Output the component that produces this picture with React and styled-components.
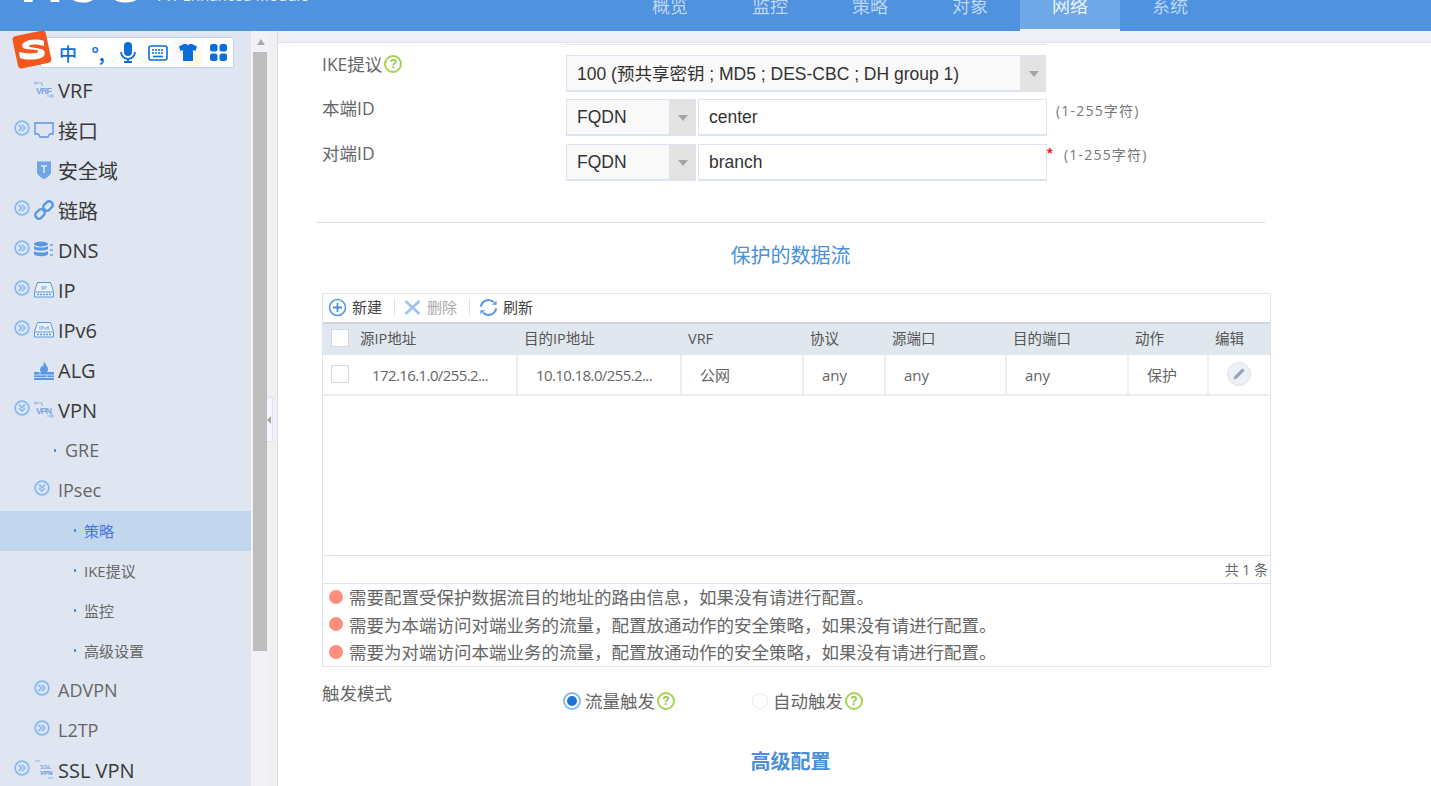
import React from 'react';
import styled, { createGlobalStyle } from 'styled-components';
import { Pencil } from 'lucide-react';

const sans = `"Open Sans", "Noto Sans CJK SC", sans-serif`;
const arial = `"Liberation Sans", "Noto Sans CJK SC", sans-serif`;
const columns = '29px 164px 164px 122px 82px 121px 122px 80px 63px';

const Global = createGlobalStyle`
  html, body { margin: 0; padding: 0; background: #fff; overflow: hidden; }
  * { box-sizing: border-box; }
`;

const Page = styled.div`
  width: 1431px;
  height: 786px;
  overflow: hidden;
  position: relative;
  display: flex;
  flex-direction: column;
  font-family: ${sans};
`;

/* header */
const Header = styled.header`
  height: 31px;
  flex: none;
  background: #4f92e0;
  display: flex;
  overflow: hidden;
`;
const Logo = styled.div`
  width: 157px;
  flex: none;
  margin-top: -40px;
  padding-left: 20px;
  font: bold 60px/44px ${arial};
  color: #fff;
  letter-spacing: 3px;
`;
const Module = styled.div`
  margin-top: -12px;
  font: 15px/15px ${sans};
  color: #e6f0fb;
  white-space: nowrap;
  width: 463px;
`;
const Tabs = styled.nav`
  display: flex;
`;
const Tab = styled.div`
  width: 100px;
  height: 31px;
  text-align: center;
  font-size: 18px;
  line-height: 13px;
  color: ${p => (p.$active ? '#eaf3fd' : '#bcd6f4')};
  background: ${p => (p.$active ? '#6fa8e7' : 'transparent')};
  border-bottom: ${p => (p.$active ? '2px solid #eef0f5' : 'none')};
`;

/* body */
const Body = styled.div`
  flex: 1;
  display: flex;
  min-height: 0;
`;
const Sidebar = styled.aside`
  width: 251px;
  flex: none;
  background: #dfe5f1;
  padding-top: 40px;
  overflow: hidden;
`;
const NavRow = styled.div`
  height: 40px;
  display: flex;
  align-items: center;
  padding-left: ${p => p.$indent}px;
  padding-bottom: 2px;
  gap: ${p => p.$gap || 4}px;
  background: ${p => (p.$active ? '#c2d6ee' : 'transparent')};
`;
const NavLabel = styled.span`
  font-size: ${p => p.$size}px;
  color: ${p => p.$color};
  white-space: nowrap;
`;
const Dot = styled.i`
  width: 2px;
  height: 3px;
  background: #4a90d9;
  flex: none;
`;
const IconSlot = styled.svg`
  width: 20px;
  height: 20px;
  flex: none;
`;
const ToggleSvg = styled.svg`
  width: 16px;
  height: 16px;
  flex: none;
  margin-top: -4px;
`;
const ScrollTrack = styled.div`
  width: 16px;
  flex: none;
  background: #f2f2f5;
  padding: 8px 0 0 2px;
`;
const ScrollArrow = styled.div`
  width: 0;
  height: 0;
  margin: 0 0 7px 4px;
  border-left: 4.5px solid transparent;
  border-right: 4.5px solid transparent;
  border-bottom: 6px solid #a9a9a9;
`;
const ScrollThumb = styled.div`
  width: 14px;
  height: 599px;
  background: #bdbdbd;
`;
const Splitter = styled.div`
  width: 11px;
  flex: none;
  background: #f0f0f4;
  border-right: 1px solid #dcdce2;
  padding-top: 366px;
`;
const Grip = styled.div`
  width: 6px;
  height: 45px;
  background: #f4f6fb;
  border: 1px solid #dde4f0;
  border-left: none;
  display: flex;
  align-items: center;
  &::before {
    content: '';
    border-right: 4px solid #a5a5a5;
    border-top: 4px solid transparent;
    border-bottom: 4px solid transparent;
  }
`;

/* form */
const Main = styled.main`
  flex: 1;
  display: flex;
  flex-direction: column;
  min-width: 0;
`;
const TopBand = styled.div`
  height: 12px;
  flex: none;
  background: #eef0f5;
  border-bottom: 1px solid #e2e3e8;
`;
const Stub = styled.div`
  width: 480px;
  height: 2px;
  flex: none;
  margin: 0 0 10px 288px;
  border-bottom: 1px solid #dde4f0;
`;
const FieldRow = styled.div`
  display: flex;
  align-items: flex-start;
  flex: none;
  height: 37px;
  margin: 0 0 ${p => p.$after}px 44px;
`;
const Label = styled.label`
  width: 244px;
  flex: none;
  font-size: 17.5px;
  line-height: 18px;
  color: #666;
  display: flex;
  align-items: center;
`;
const SelectBox = styled.div`
  width: ${p => p.$w}px;
  height: 37px;
  flex: none;
  display: flex;
  background: #f9f9f9;
  border: 1px solid #dde4f0;
  border-right: none;
`;
const SelectText = styled.div`
  flex: 1;
  padding-left: 10px;
  font: 17.5px/${p => p.$line || 35}px ${arial};
  color: #333;
  white-space: nowrap;
  border-right: 1px solid #dde4f0;
  border-bottom: 1px solid #dde4f0;
`;
const SelectArrow = styled.div`
  width: ${p => p.$w}px;
  flex: none;
  background: #e3e3e3;
  display: flex;
  align-items: center;
  justify-content: center;
  &::before {
    content: '';
    border-top: 6px solid #a5a5a5;
    border-left: 5.5px solid transparent;
    border-right: 5.5px solid transparent;
  }
`;
const TextInput = styled.div`
  width: 349px;
  height: 37px;
  flex: none;
  margin-left: 2px;
  padding-left: 10px;
  font: 17.5px/34px ${arial};
  color: #333;
  background: #fff;
  border: 1px solid #dde4f0;
  border-width: 1px 1px 2px;
`;
const Star = styled.span`
  width: 6px;
  margin: 0 2px 0 0;
  flex: none;
  font: bold 14px/18px ${arial};
  color: #f11;
`;
const Hint = styled.span`
  margin-left: ${p => p.$left}px;
  margin-top: ${p => p.$top}px;
  font-size: 14px;
  line-height: 16px;
  letter-spacing: 1.2px;
  color: #777;
  white-space: nowrap;
`;
const Divider = styled.hr`
  width: 949px;
  height: 1px;
  margin: 0 0 0 38px;
  border: none;
  background: #d9dfea;
  flex: none;
`;
const SectionTitle = styled.h3`
  width: 949px;
  flex: none;
  margin: ${p => p.$top}px 0 0 38px;
  text-align: center;
  font-size: 20px;
  line-height: 26px;
  font-weight: ${p => (p.$bold ? 700 : 400)};
  color: #4a90d9;
`;

/* table panel */
const Panel = styled.section`
  width: 949px;
  height: 374px;
  flex: none;
  margin: 24px 0 0 44px;
  border: 1px solid #dde4f0;
  display: flex;
  flex-direction: column;
`;
const Toolbar = styled.div`
  height: 28px;
  flex: none;
  display: flex;
  align-items: center;
  padding: 0 0 2px 5px;
`;
const ToolButton = styled.div`
  display: flex;
  align-items: center;
  gap: 5px;
  font-size: 15px;
  line-height: 20px;
  color: ${p => (p.$off ? '#a9a9a9' : '#444')};
`;
const ToolSep = styled.i`
  width: 1px;
  height: 18px;
  background: #e6e6e6;
  margin: 0 ${p => p.$right}px 0 12px;
`;
const HeadRow = styled.div`
  display: grid;
  grid-template-columns: ${columns};
  height: 33px;
  flex: none;
  background: #e1e7ee;
  border-top: 2px solid #d2d6db;
`;
const HeadCell = styled.div`
  padding-left: ${p => p.$pad ?? 8}px;
  font-size: 14.5px;
  line-height: 29px;
  color: #555;
  white-space: nowrap;
`;
const DataRow = styled.div`
  display: grid;
  grid-template-columns: ${columns};
  height: 41px;
  flex: none;
  border-bottom: 2px solid #eeeeee;
`;
const DataCell = styled.div`
  padding-left: ${p => p.$pad ?? 18}px;
  font-size: 15px;
  line-height: 38px;
  letter-spacing: ${p => (p.$tight ? '-0.6px' : 'normal')};
  color: #666;
  white-space: nowrap;
  border-left: 2px solid ${p => (p.$bare ? 'transparent' : '#eeeeee')};
  display: flex;
  align-items: center;
`;
const Check = styled.span`
  width: 18px;
  height: 18px;
  display: block;
  margin: ${p => p.$top}px 0 0 ${p => p.$left}px;
  background: #fff;
  border: 1px solid #d8d8d8;
`;
const EditBtn = styled.span`
  width: 24px;
  height: 24px;
  margin-left: 18px;
  margin-top: -2px;
  border-radius: 50%;
  background: #eef0f7;
  border: 1px solid #dfe2ec;
  display: flex;
  align-items: center;
  justify-content: center;
  color: #9aa5bb;
`;
const Empty = styled.div`
  flex: 1;
`;
const Total = styled.div`
  height: 29px;
  flex: none;
  padding-right: 2px;
  text-align: right;
  font-size: 14px;
  line-height: 27px;
  color: #666;
  border-top: 1px solid #dde4f0;
  border-bottom: 1px solid #dde4f0;
`;
const Notes = styled.ul`
  list-style: none;
  margin: 0;
  padding: 0 0 0 6px;
`;
const Note = styled.li`
  display: flex;
  align-items: center;
  gap: 6px;
  height: 27.5px;
  padding-bottom: 1px;
  font-size: 17.5px;
  color: #666;
  white-space: nowrap;
  &::before {
    content: '';
    width: 14px;
    height: 14px;
    border-radius: 50%;
    background: #ff8f7c;
    flex: none;
  }
`;

/* trigger mode */
const ModeRow = styled.div`
  display: flex;
  align-items: flex-start;
  margin: 17px 0 0 44px;
  flex: none;
`;
const ModeOption = styled.div`
  display: flex;
  align-items: center;
  width: ${p => p.$w}px;
  flex: none;
  margin-top: 5px;
  font-size: 17.5px;
  line-height: 24px;
  color: #666;
`;
const Radio = styled.span`
  width: 14px;
  height: 14px;
  flex: none;
  margin: 0 6px 0 -1px;
  border-radius: 50%;
  background: ${p => (p.$on ? '#1f73d8' : '#fff')};
  border: ${p => (p.$on ? '2px solid #fff' : 'none')};
  box-shadow: 0 0 0 ${p => (p.$on ? '2px #8ab9ee' : '1px #ececec')};
`;
const HelpMark = styled.span`
  width: 18px;
  height: 18px;
  flex: none;
  margin-left: 2px;
  border-radius: 50%;
  border: 2px solid #a3d64f;
  color: #8cc63f;
  font: bold 12px/14px ${arial};
  text-align: center;
  background: #fff;
`;

/* input method bar floating over the sidebar */
const ImeBar = styled.div`
  position: absolute;
  left: 40px;
  top: 37px;
  width: 194px;
  height: 31px;
  padding-left: 12px;
  display: flex;
  align-items: center;
  background: #fff;
  border: 1px solid #c0d2ea;
  border-radius: 2px;
  color: #0a6ed8;
`;
const ImeSlot = styled.span`
  width: 30px;
  height: 29px;
  flex: none;
  display: flex;
  align-items: center;
  justify-content: center;
  font: ${p => p.$weight || 500} 18px/20px "Noto Sans CJK SC", sans-serif;
  background: ${p => (p.$glow ? 'radial-gradient(circle at 70% 70%, #fff3cf 0, transparent 45%), radial-gradient(circle at 35% 35%, #efe6fb 0, transparent 50%)' : 'none')};
`;
const ImeLogo = styled.svg`
  position: absolute;
  left: 11px;
  top: 30px;
  width: 42px;
  height: 40px;
`;

const Toggle = ({ down }) => (
  <ToggleSvg viewBox="0 0 16 16">
    <circle cx="8" cy="8" r="6.900" fill="#d8e5f6" stroke="#8ab8ec" strokeWidth="1.700" />
    <g fill="none" stroke="#8ab8ec" strokeWidth="1.700" transform={down ? 'rotate(90 8 8)' : undefined}>
      <path d="M4.500 5l3 3-3 3" />
      <path d="M8 5l3 3-3 3" />
    </g>
  </ToggleSvg>
);

const blue = '#5b98e2';

const NetIcon = ({ text }) => (
  <IconSlot viewBox="0 0 20 20">
    <path d="M2 3h6v3M13 16h4" stroke="#8db6e8" fill="none" />
    <circle cx="1.500" cy="3" r="1.200" fill="none" stroke="#8db6e8" />
    <circle cx="18" cy="16" r="1.200" fill="none" stroke="#8db6e8" />
    <text x="2" y="14" fontSize="9" fontWeight="700" fontFamily="Liberation Sans" fill="#7ba9e2" textLength="16">{text}</text>
  </IconSlot>
);

const BoxIcon = ({ text, x, size }) => (
  <IconSlot viewBox="0 0 20 20">
    <path d="M3.500 2.500h13l3 9v5.500H.5v-5.500z" fill="#eef3fa" stroke={blue} />
    <path d="M1 12h18" stroke={blue} />
    <path d="M3 14.500h14" stroke={blue} strokeWidth="1.500" strokeDasharray="2 1" />
    <text x={x} y="10" fontSize={size} fontWeight="700" fontFamily="Liberation Sans" fill="#7ba9e2">{text}</text>
  </IconSlot>
);

const icons = {
  vrf: <NetIcon text="VRF" />,
  vpn: <NetIcon text="VPN" />,
  ssl: (
    <IconSlot viewBox="0 0 20 20">
      <path d="M1 1h5M14 18h5" stroke="#8db6e8" fill="none" />
      <text x="6" y="9" fontSize="6" fontWeight="700" fontFamily="Liberation Sans" fill="#7ba9e2">SSL</text>
      <text x="6" y="15" fontSize="6" fontWeight="700" fontFamily="Liberation Sans" fill="#5b98e2">VPN</text>
    </IconSlot>
  ),
  port: (
    <IconSlot viewBox="0 0 20 20">
      <path d="M1 3h18v11h-3.500l-1.500 3H6l-1.500-3H1z" fill="none" stroke={blue} strokeWidth="1.400" />
    </IconSlot>
  ),
  shield: (
    <IconSlot viewBox="0 0 20 20">
      <path d="M3 1.500h14v10.500c0 3-4 5.500-7 7-3-1.500-7-4-7-7z" fill="#6fa5e6" />
      <path d="M7 6h6M10 6v7" stroke="#dfe8f5" strokeWidth="1.500" />
    </IconSlot>
  ),
  link: (
    <IconSlot viewBox="0 0 20 20">
      <g fill="none" stroke={blue} strokeWidth="2.400">
        <rect x="10.500" y="1" width="7" height="10" rx="3" transform="rotate(45 14 6)" />
        <rect x="2.500" y="9" width="7" height="10" rx="3" transform="rotate(45 6 14)" />
      </g>
    </IconSlot>
  ),
  dns: (
    <IconSlot viewBox="0 0 20 20">
      <ellipse cx="7" cy="4" rx="7" ry="2.500" fill={blue} />
      <path d="M0 6c2 2 12 2 14 0v3c-2 2-12 2-14 0zM0 11c2 2 12 2 14 0v3c-1 3-13 3-14 0z" fill={blue} />
      <path d="M16 4h3v2h-3zM16 9h3v2h-3zM16 14h3v2h-3z" fill="#86b3ea" />
    </IconSlot>
  ),
  ip: <BoxIcon text="IP" x={7} size={6} />,
  ipv6: <BoxIcon text="IPv6" x={5} size={5} />,
  alg: (
    <IconSlot viewBox="0 0 20 20">
      <path d="M0 12h20v8H0z" fill={blue} />
      <path d="M0 15h20M0 17.500h20M6 12v3M13 15v3" stroke="#dfe5f1" strokeWidth=".8" />
      <path d="M10 1c.5 2.500 4 5 4 8.500 0 1-.5 2-1 2.500H7c-.5-.5-1-1.500-1-2.500C6 8 7.500 7 8 5.500c.5.500 1 1 1 1.500.5-2 1-4 1-6z" fill={blue} />
    </IconSlot>
  ),
};

const nav = [
  { label: 'VRF', icon: 'vrf', indent: 34 },
  { label: '接口', icon: 'port', toggle: true, indent: 14 },
  { label: '安全域', icon: 'shield', indent: 34 },
  { label: '链路', icon: 'link', toggle: true, indent: 14 },
  { label: 'DNS', icon: 'dns', toggle: true, indent: 14 },
  { label: 'IP', icon: 'ip', toggle: true, indent: 14 },
  { label: 'IPv6', icon: 'ipv6', toggle: true, indent: 14 },
  { label: 'ALG', icon: 'alg', indent: 34 },
  { label: 'VPN', icon: 'vpn', toggle: true, down: true, indent: 14 },
  { label: 'GRE', dot: true, indent: 54, gap: 9, size: 18, color: '#666' },
  { label: 'IPsec', toggle: true, down: true, indent: 34, gap: 8, size: 18, color: '#666' },
  { label: '策略', dot: true, indent: 74, gap: 8, size: 15, color: '#4a74e0', active: true },
  { label: 'IKE提议', dot: true, indent: 74, gap: 8, size: 15, color: '#666' },
  { label: '监控', dot: true, indent: 74, gap: 8, size: 15, color: '#666' },
  { label: '高级设置', dot: true, indent: 74, gap: 8, size: 15, color: '#666' },
  { label: 'ADVPN', toggle: true, indent: 34, gap: 8, size: 18, color: '#666' },
  { label: 'L2TP', toggle: true, indent: 34, gap: 8, size: 18, color: '#666' },
  { label: 'SSL VPN', icon: 'ssl', toggle: true, indent: 14 },
];

const tabs = ['概览', '监控', '策略', '对象', '网络', '系统'];
const heads = ['源IP地址', '目的IP地址', 'VRF', '协议', '源端口', '目的端口', '动作', '编辑'];
const cells = ['172.16.1.0/255.2...', '10.10.18.0/255.2...', '公网', 'any', 'any', 'any', '保护'];
const notes = [
  '需要配置受保护数据流目的地址的路由信息，如果没有请进行配置。',
  '需要为本端访问对端业务的流量，配置放通动作的安全策略，如果没有请进行配置。',
  '需要为对端访问本端业务的流量，配置放通动作的安全策略，如果没有请进行配置。',
];

export default function App() {
  return (
    <Page>
      <Global />
      <Header>
        <Logo>H3C</Logo>
        <Module>FW Enhanced Module</Module>
        <Tabs>
          {tabs.map(t => (
            <Tab key={t} $active={t === '网络'}>{t}</Tab>
          ))}
        </Tabs>
      </Header>

      <Body>
        <Sidebar>
          {nav.map(n => (
            <NavRow key={n.label} $indent={n.indent} $gap={n.gap} $active={n.active}>
              {n.toggle && <Toggle down={n.down} />}
              {n.dot && <Dot />}
              {n.icon && icons[n.icon]}
              <NavLabel $size={n.size || 20} $color={n.color || '#3a3a3a'}>{n.label}</NavLabel>
            </NavRow>
          ))}
        </Sidebar>
        <ScrollTrack>
          <ScrollArrow />
          <ScrollThumb />
        </ScrollTrack>
        <Splitter>
          <Grip />
        </Splitter>

        <Main>
          <TopBand />
          <Stub />
          <FieldRow $after={7}>
            <Label>IKE提议<HelpMark>?</HelpMark></Label>
            <SelectBox $w={480}>
              <SelectText $line={37}>100 (预共享密钥 ; MD5 ; DES-CBC ; DH group 1)</SelectText>
              <SelectArrow $w={25} />
            </SelectBox>
          </FieldRow>
          <FieldRow $after={8}>
            <Label>本端ID</Label>
            <SelectBox $w={130}>
              <SelectText>FQDN</SelectText>
              <SelectArrow $w={26} />
            </SelectBox>
            <TextInput>center</TextInput>
            <Hint $left={9} $top={4}>(1-255字符)</Hint>
          </FieldRow>
          <FieldRow $after={41}>
            <Label>对端ID</Label>
            <SelectBox $w={130}>
              <SelectText>FQDN</SelectText>
              <SelectArrow $w={26} />
            </SelectBox>
            <TextInput>branch</TextInput>
            <Star>*</Star>
            <Hint $left={9} $top={3}>(1-255字符)</Hint>
          </FieldRow>
          <Divider />
          <SectionTitle $top={20}>保护的数据流</SectionTitle>

          <Panel>
            <Toolbar>
              <ToolButton>
                <svg width="19" height="19" viewBox="0 0 19 19">
                  <circle cx="9.500" cy="9.500" r="8" fill="none" stroke="#5b98e2" strokeWidth="1.600" />
                  <path d="M5 9.500h9M9.500 5v9" stroke="#4a90d9" strokeWidth="1.800" />
                </svg>
                新建
              </ToolButton>
              <ToolSep $right={8} />
              <ToolButton $off>
                <svg width="19" height="19" viewBox="0 0 19 19">
                  <path d="M2.500 3l14 13M16.500 3l-14 13" stroke="#9cc2ee" strokeWidth="2.600" />
                </svg>
                删除
              </ToolButton>
              <ToolSep $right={9} />
              <ToolButton>
                <svg width="19" height="19" viewBox="0 0 20 19">
                  <path d="M2 8.500A8 8 0 0 1 15.500 4" fill="none" stroke="#5b98e2" strokeWidth="2.200" />
                  <path d="M18 10.500A8 8 0 0 1 4.500 15" fill="none" stroke="#5b98e2" strokeWidth="2.200" />
                  <path d="M13.500 6.500h5v-4zM6.500 12.500h-5v4z" fill="#5b98e2" />
                </svg>
                刷新
              </ToolButton>
            </Toolbar>
            <HeadRow>
              <HeadCell $pad={0}><Check $top={5} $left={8} /></HeadCell>
              {heads.map(h => (
                <HeadCell key={h}>{h}</HeadCell>
              ))}
            </HeadRow>
            <DataRow>
              <DataCell $bare $pad={0}><Check $top={-2} $left={6} /></DataCell>
              {cells.map((c, i) => (
                <DataCell key={i} $bare={i === 0} $tight={i < 2}>{c}</DataCell>
              ))}
              <DataCell $pad={0}>
                <EditBtn><Pencil size={12} fill="currentColor" strokeWidth={1.500} /></EditBtn>
              </DataCell>
            </DataRow>
            <Empty />
            <Total>共 1 条</Total>
            <Notes>
              {notes.map(n => (
                <Note key={n}>{n}</Note>
              ))}
            </Notes>
          </Panel>

          <ModeRow>
            <Label>触发模式</Label>
            <ModeOption $w={188}><Radio $on />流量触发<HelpMark>?</HelpMark></ModeOption>
            <ModeOption $w={200}><Radio />自动触发<HelpMark>?</HelpMark></ModeOption>
          </ModeRow>
          <SectionTitle $top={36} $bold>高级配置</SectionTitle>
        </Main>
      </Body>

      <ImeBar>
        <ImeSlot>中</ImeSlot>
        <ImeSlot $weight={700}>°,</ImeSlot>
        <ImeSlot>
          <svg width="18" height="21" viewBox="0 0 18 21">
            <rect x="5" y="0" width="8" height="14" rx="4" fill="currentColor" />
            <path d="M2 10a7 7 0 0 0 14 0M9 17v3M5 20h8" fill="none" stroke="currentColor" strokeWidth="1.800" />
          </svg>
        </ImeSlot>
        <ImeSlot>
          <svg width="20" height="16" viewBox="0 0 20 16">
            <rect x="1" y="1" width="18" height="14" rx="2" fill="none" stroke="currentColor" strokeWidth="1.600" />
            <path d="M4 5h12M4 8h12" stroke="currentColor" strokeWidth="1.600" strokeDasharray="2 1" />
            <path d="M5 11.500h10" stroke="currentColor" strokeWidth="1.600" />
          </svg>
        </ImeSlot>
        <ImeSlot $glow>
          <svg width="18" height="17" viewBox="0 0 18 17">
            <path d="M5 0h2.500c.5 1.500 2.500 1.500 3 0H13l5 2.500-1.500 4.500-2.500-1v11H4V6L1.500 7 0 2.500z" fill="currentColor" />
          </svg>
        </ImeSlot>
        <ImeSlot>
          <svg width="17" height="17" viewBox="0 0 17 17" fill="currentColor">
            <rect width="7.500" height="7.500" rx="2.500" />
            <rect x="9.500" width="7.500" height="7.500" rx="2.500" />
            <rect y="9.500" width="7.500" height="7.500" rx="2.500" />
            <rect x="9.500" y="9.500" width="7.500" height="7.500" rx="2.500" />
          </svg>
        </ImeSlot>
      </ImeBar>
      <ImeLogo viewBox="0 0 42 40">
        <rect x="4" y="3" width="34" height="33" rx="4" fill="#f4571e" transform="rotate(-12 21 20)" />
        <path d="M33 11c-6-2-14-2-19 1-4 2-4 6 1 7l11 1c2 1 1 3-2 3-5 1-11 0-16-1l1 6c6 2 15 2 21 0 5-2 5-8 0-9l-11-2c-2-1-1-2 1-2 4-1 9 0 13 1z" fill="#fff" />
      </ImeLogo>
    </Page>
  );
}
